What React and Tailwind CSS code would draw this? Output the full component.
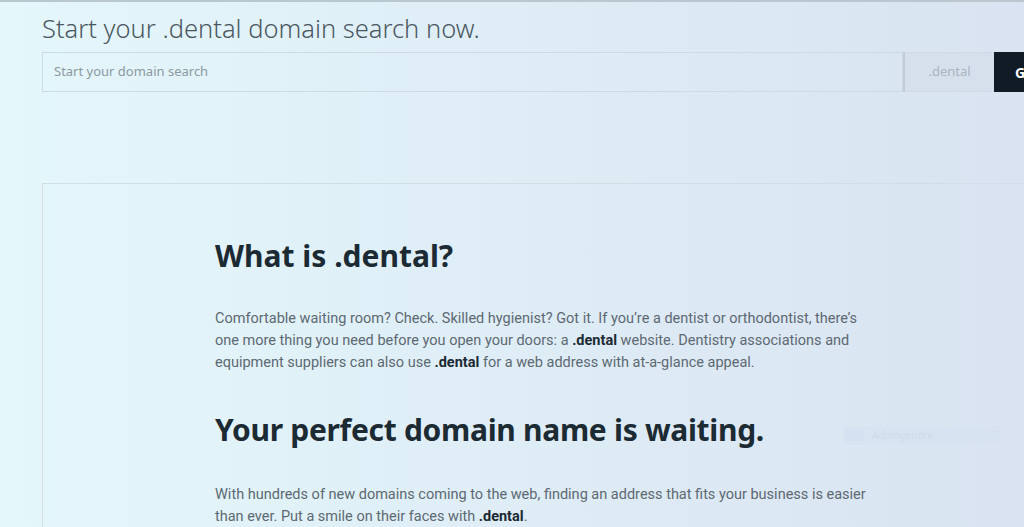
import React from 'react';

/**
 * .dental domain landing section: search bar on top, info card below.
 */

const bodyFont = { fontFamily: 'Roboto, "Noto Sans", sans-serif' };

function SearchBar() {
  return (
    <div className="flex h-[40px]">
      <div className="flex w-[861px] shrink-0 items-center border border-[#cfdbe2] px-[11px]">
        <span className="text-[13px] text-[#8d989f]">Start your domain search</span>
      </div>
      <div className="flex w-[91px] shrink-0 items-center justify-center border-y border-l-2 border-[#c3ccd5] border-y-[#cfdbe2] bg-[#d6e0ec]">
        <span className="text-[13px] text-[#a9b4be]">.dental</span>
      </div>
      <div className="flex w-[120px] shrink-0 items-center bg-[#111b25] pl-[21px]">
        <span className="text-[14px] font-bold text-white">Go</span>
      </div>
    </div>
  );
}

export default function App() {
  return (
    <div
      className="relative h-[527px] w-[1024px] overflow-hidden border-t-2 border-[#b9c7cf] bg-gradient-to-r from-[#e4f7fb] to-[#d9e3f1]"
      style={{ fontFamily: '"Noto Sans", Roboto, sans-serif' }}
    >
      <div className="pl-[42px]">
        {/* Search header */}
        <h2 className="pt-[10px] text-[25.5px] font-light leading-[32px] text-[#4b5862]">
          Start your .dental domain search now.
        </h2>
        <div className="mt-[8px]">
          <SearchBar />
        </div>

        {/* Info card */}
        <div className="mt-[91px] h-[400px] w-[1100px] border border-[#d2dee4] pl-[172px] pt-[52px]">
          <h1 className="text-[30px] font-bold leading-[40px] text-[#1c2a33]">What is .dental?</h1>
          <p className="mt-[32px] w-[662px] text-[14.5px] leading-[22px] text-[#5d6972]" style={bodyFont}>
            Comfortable waiting room? Check. Skilled hygienist? Got it. If you’re a dentist or orthodontist, there’s
            one more thing you need before you open your doors: a <b className="text-[#1c2a33]">.dental</b> website. Dentistry
            associations and equipment suppliers can also use <b className="text-[#1c2a33]">.dental</b> for a web address
            with at-a-glance appeal.
          </p>
          <h1 className="mt-[36px] text-[30px] font-bold leading-[40px] tracking-[-0.3px] text-[#1c2a33]">
            Your perfect domain name is waiting.
          </h1>
          <p className="mt-[34px] w-[662px] text-[14.5px] leading-[22px] text-[#5d6972]" style={bodyFont}>
            With hundreds of new domains coming to the web, finding an address that fits your business is easier
            than ever. Put a smile on their faces with <b className="text-[#1c2a33]">.dental</b>.
          </p>
        </div>
      </div>

      {/* faint ghost overlay */}
      <div className="absolute left-[843px] top-[424px] flex h-[18px] w-[158px] items-center gap-[8px] rounded-[2px] bg-[#d6e3f1] px-[3px] opacity-60">
        <div className="h-[12px] w-[18px] bg-[#cfdeef]" />
        <span className="text-[10px] text-[#c6d5e8]">Addingendre</span>
      </div>
    </div>
  );
}
